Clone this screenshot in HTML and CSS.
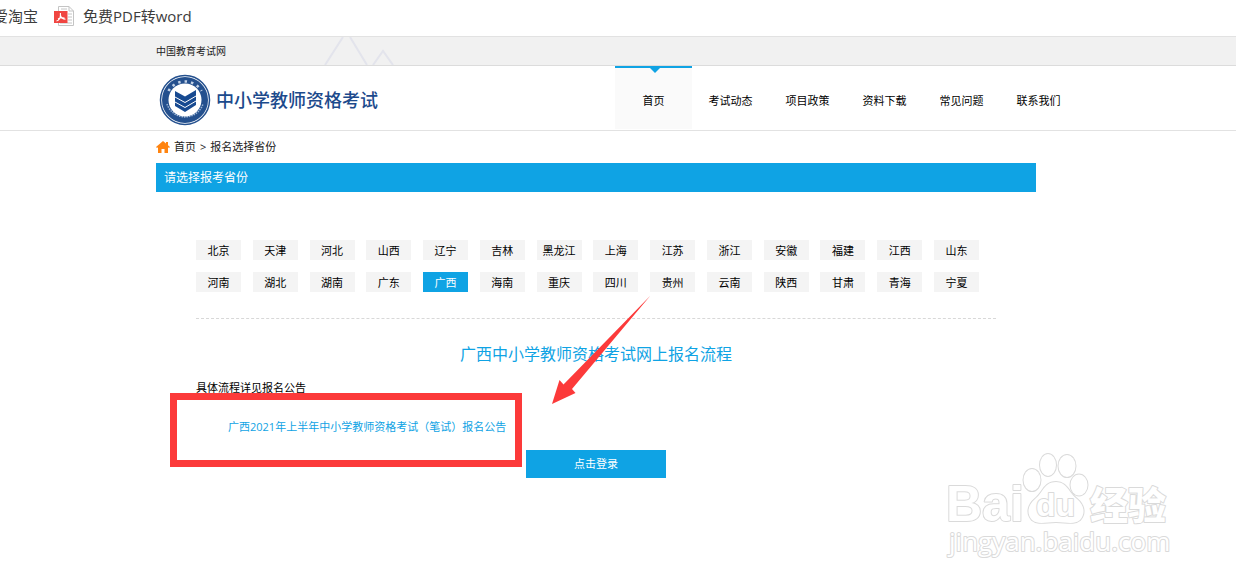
FILE: index.html
```
<!DOCTYPE html>
<html lang="zh-CN">
<head>
<meta charset="utf-8">
<title>中小学教师资格考试</title>
<link rel="stylesheet" href="styles.css">
</head>
<body>
<div class="bookmarks">
  <a href="#">爱淘宝</a>
  <a href="#" class="bookmark-pdf">
    <svg width="20" height="20" viewBox="0 0 20 20" aria-hidden="true">
      <path d="M4.500 .5H15L19.500 5V19.500H4.500Z" fill="#fff" stroke="#c4c4c4"/>
      <path d="M15 .5V5h4.500M14 8h4M14 11h4M14 14h4M6 17h12M7 3h6" fill="none" stroke="#c4c4c4"/>
      <path d="M0 5h13.500v12H0z" fill="#f04541"/>
      <path d="M6.400 7v2.500C6.200 12 4.500 14.500 2.500 15M6.500 9.500c.8 2.600 2.500 3.600 5 3.800M4 13c2-1.200 4-1.500 6.500-1" fill="none" stroke="#fff" stroke-width="1.100"/>
    </svg>
    免费PDF转word
  </a>
</div>

<div class="topbar">
  <a href="#">中国教育考试网</a>
  <svg class="hills" width="74" height="28" viewBox="0 0 74 28" aria-hidden="true">
    <path d="M1 28L19 0M26 0L43 28M49 28L59 14L69 28" fill="none" stroke="#e3e4ec" stroke-width="2"/>
  </svg>
</div>

<header class="header">
  <a href="#" class="brand">
    <svg width="52" height="52" viewBox="0 0 52 52" aria-hidden="true">
      <circle cx="26" cy="26" r="24.500" fill="#fff" stroke="#24508e" stroke-width="1.500"/>
      <circle cx="26" cy="26" r="19.500" fill="none" stroke="#24508e" stroke-width="7"/>
      <path d="M9.500 17a19 19 0 0 1 33 0" fill="none" stroke="#c3d2e6" stroke-width="2.500" stroke-dasharray="2.500 4"/>
      <path d="M8 30a19 19 0 0 0 36 0" fill="none" stroke="#9db5d4" stroke-width="1.500" stroke-dasharray="1.500 1"/>
      <circle cx="26" cy="26" r="16.500" fill="#fff"/>
      <path d="M16 17l10 5.500L37 16v15l-11 7-10-6z" fill="#174a91"/>
      <path d="M16 23l10 5.500M16 28l10 5.500M26 28.500L37 22M26 33.500L37 27" stroke="#fff" stroke-width="1"/>
    </svg>
    <span>中小学教师资格考试</span>
  </a>
  <nav class="nav">
    <a href="#" class="active">首页</a>
    <a href="#">考试动态</a>
    <a href="#">项目政策</a>
    <a href="#">资料下载</a>
    <a href="#">常见问题</a>
    <a href="#">联系我们</a>
  </nav>
</header>

<main class="main">
  <div class="crumbs">
    <svg width="14" height="12" viewBox="0 0 14 12" aria-hidden="true">
      <path d="M7 0L0 6l1 1 1-.8V12h3.500V8h3v4H12V6.200l1 .8 1-1-2-1.800V1h-2v1.500z" fill="#ff8410"/>
    </svg>
    <a href="#">首页</a><span>&gt;</span><span>报名选择省份</span>
  </div>
  <h1 class="bar">请选择报考省份</h1>

  <div class="content">
    <div class="provinces">
      <a href="#">北京</a><a href="#">天津</a><a href="#">河北</a><a href="#">山西</a><a href="#">辽宁</a><a href="#">吉林</a><a href="#">黑龙江</a><a href="#">上海</a><a href="#">江苏</a><a href="#">浙江</a><a href="#">安徽</a><a href="#">福建</a><a href="#">江西</a><a href="#">山东</a>
      <a href="#">河南</a><a href="#">湖北</a><a href="#">湖南</a><a href="#">广东</a><a href="#" class="selected">广西</a><a href="#">海南</a><a href="#">重庆</a><a href="#">四川</a><a href="#">贵州</a><a href="#">云南</a><a href="#">陕西</a><a href="#">甘肃</a><a href="#">青海</a><a href="#">宁夏</a>
    </div>
    <h2 class="title">广西中小学教师资格考试网上报名流程</h2>
    <p class="note">具体流程详见报名公告</p>
    <a href="#" class="notice">广西2021年上半年中小学教师资格考试（笔试）报名公告</a>
    <button type="button" class="login">点击登录</button>
  </div>

  <div class="highlight"></div>
  <svg class="arrow" width="100" height="110" viewBox="0 0 100 110" aria-hidden="true">
    <path d="M98.500 .5L20 94L23.500 98L0 109L7.500 85L11.500 89.500z" fill="#fc3a3a"/>
  </svg>
</main>

<svg class="watermark" width="230" height="120" viewBox="0 0 230 120" role="img" aria-label="Baidu 经验">
  <g class="outline">
    <text x="1" y="75" class="wm-bai">Bai</text>
    <ellipse cx="87" cy="34" rx="8.500" ry="11"/>
    <ellipse cx="103" cy="19" rx="8" ry="11"/>
    <ellipse cx="122" cy="20" rx="8.500" ry="11"/>
    <ellipse cx="134" cy="39" rx="8.500" ry="10.500"/>
    <path d="M111 36c-12 0-13 11-21 17-7 6-9 14-3 21 6 5 14 2 24 2s18 3 24-2c6-7 4-15-3-21-8-6-10-17-21-17z"/>
    <text x="91" y="70" class="wm-du">du</text>
    <text x="145" y="73" class="wm-cn">经验</text>
    <text x="4" y="105" class="wm-url">jingyan.baidu.com</text>
  </g>
</svg>
</body>
</html>
```
FILE: styles.css
```
* { box-sizing: border-box; }
body {
  margin: 0;
  min-height: 100vh;
  background: #fff;
  color: #000;
  font: 11px/20px "Open Sans", "Noto Sans CJK SC", sans-serif;
  position: relative;
}
a { color: inherit; text-decoration: none; }
h1, h2, p { margin: 0; font-weight: 400; }

.bookmarks {
  display: flex;
  align-items: center;
  gap: 16px;
  height: 37px;
  margin-left: -7px;
  padding-bottom: 4px;
  border-bottom: 1px solid #e2e2e2;
  font-size: 15px;
  color: #3c3c3c;
  white-space: nowrap;
}
.bookmark-pdf { display: flex; align-items: center; gap: 9px; }

.topbar {
  display: flex;
  align-items: center;
  gap: 98px;
  height: 29px;
  padding-left: 156px;
  background: #f1f1f1;
  border-bottom: 1px solid #dcdcdc;
  font-size: 10px;
  color: #222;
}

.header {
  display: flex;
  height: 65px;
  padding-left: 159px;
  border-bottom: 1px solid #e2e2e2;
}
.brand {
  display: flex;
  align-items: center;
  gap: 5px;
  width: 456px;
  padding-top: 4px;
  font-size: 18px;
  font-weight: 500;
  color: #1c4a8c;
}
.nav { display: flex; }
.nav a {
  position: relative;
  width: 77px;
  height: 63px;
  padding-top: 25px;
  text-align: center;
}
.nav .active { background: #fafafa; border-top: 2px solid #0fa3e4; padding-top: 23px; }
.nav .active::before {
  content: "";
  position: absolute;
  top: 0;
  left: 35px;
  border: 5px solid transparent;
  border-top-color: #0fa3e4;
  border-bottom: 0;
}

.main { position: relative; width: 880px; margin-left: 156px; }
.crumbs { display: flex; align-items: center; gap: 4px; height: 32px; color: #222; }
.bar {
  height: 29px;
  padding-left: 8px;
  background: #0fa3e4;
  color: #fff;
  font-size: 12px;
  line-height: 29px;
}
.content {
  display: flex;
  flex-direction: column;
  padding: 48px 40px 0;
}
.provinces {
  display: grid;
  grid-template-columns: repeat(14, 45px);
  justify-content: space-between;
  row-gap: 12px;
  padding: 0 17px 26px 0;
  border-bottom: 1px dashed #d8d8d8;
}
.provinces a { height: 20px; background: #f4f4f4; text-align: center; line-height: 21px; }
.provinces .selected { background: #0fa3e4; color: #fff; }
.title {
  margin-top: 23px;
  color: #0fa3e4;
  font-size: 16px;
  line-height: 24px;
  text-align: center;
}
.note { margin-top: 12px; }
.notice { margin: 19px 0 13px 32px; color: #0fa3e4; }
.login {
  align-self: center;
  width: 140px;
  height: 28px;
  padding: 0;
  border: 0;
  background: #0fa3e4;
  color: #fff;
  font: inherit;
}

.highlight {
  position: absolute;
  left: 14px;
  top: 262px;
  width: 352px;
  height: 74px;
  border: 7px solid #fc3a3a;
}
.arrow { position: absolute; left: 396px; top: 164px; }

.watermark { position: absolute; left: 945px; top: 446px; }
.outline {
  fill: #fff;
  stroke: #dadada;
  stroke-width: 2px;
  stroke-linejoin: round;
  paint-order: stroke;
}
.wm-bai { font: 700 50px "Liberation Sans", sans-serif; }
.wm-du { font: 700 32px "Liberation Sans", sans-serif; }
.wm-cn { font: 900 38px "Noto Sans CJK SC", sans-serif; }
.wm-url { font: 400 26px "Open Sans", sans-serif; }
```
